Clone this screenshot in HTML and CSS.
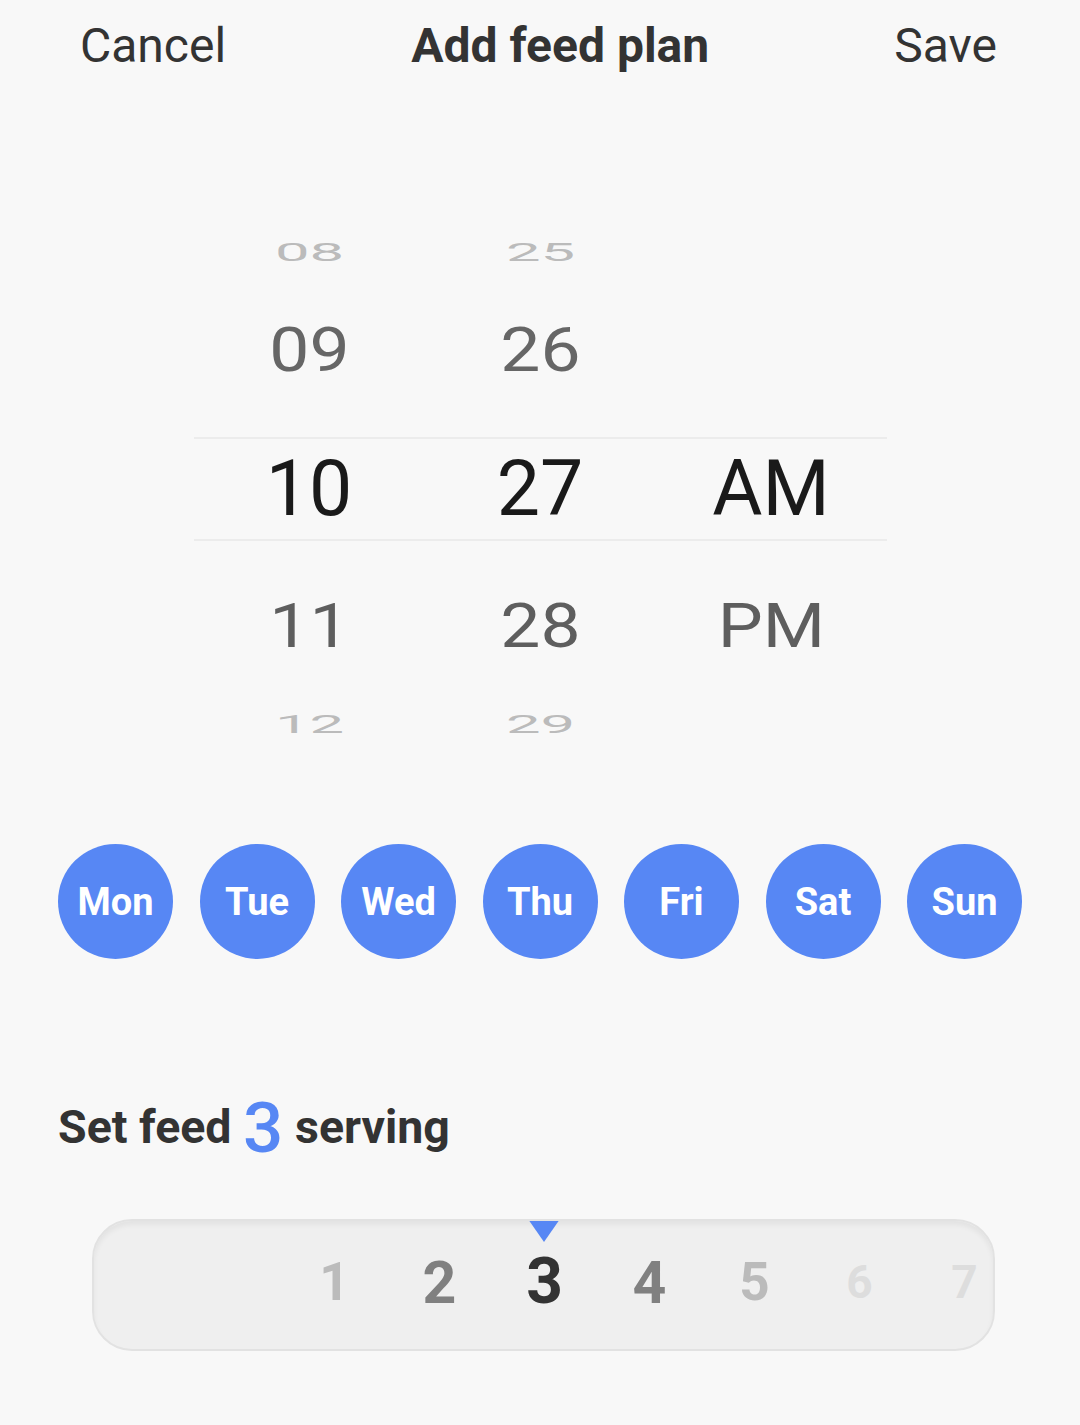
FILE: index.html
```html
<!DOCTYPE html>
<html lang="en">
<head>
    <meta charset="UTF-8">
    <meta name="viewport" content="width=device-width, initial-scale=1.0">
    <title>Add feed plan</title>
    <link rel="stylesheet" href="styles.css">
</head>
<body>
    <div id="header">
        <span class="header-btn">Cancel</span>
        <span class="header-title">Add feed plan</span>
        <span class="header-btn">Save</span>
    </div>

    <div id="picker">
        <div class="cell far">08</div>
        <div class="cell far">25</div>
        <div class="cell far"></div>

        <div class="cell near">09</div>
        <div class="cell near">26</div>
        <div class="cell near"></div>

        <div class="cell sel">10</div>
        <div class="cell sel">27</div>
        <div class="cell sel">AM</div>

        <div class="cell near below">11</div>
        <div class="cell near below">28</div>
        <div class="cell near below">PM</div>

        <div class="cell far">12</div>
        <div class="cell far">29</div>
        <div class="cell far"></div>
    </div>

    <div id="days">
        <div class="day">Mon</div>
        <div class="day">Tue</div>
        <div class="day">Wed</div>
        <div class="day">Thu</div>
        <div class="day">Fri</div>
        <div class="day">Sat</div>
        <div class="day">Sun</div>
    </div>

    <div id="feedLabel">Set feed <span class="count">3</span> serving</div>

    <div id="servings">
        <svg class="pointer" width="32" height="23" viewBox="0 0 32 23">
            <polygon points="0,0 32,0 16,23" fill="#5787f4"/>
        </svg>
        <div class="serving-row">
            <span class="num level-2">1</span>
            <span class="num level-1">2</span>
            <span class="num level-0">3</span>
            <span class="num level-1">4</span>
            <span class="num level-2">5</span>
            <span class="num level-3">6</span>
            <span class="num level-3">7</span>
        </div>
    </div>
</body>
</html>
```

FILE: styles.css
```css
body {
    margin: 0;
    padding: 0;
    font-family: Roboto, "Noto Sans", sans-serif;
    background: #f8f8f8;
    color: #333;
    width: 1080px;
    height: 1425px;
    overflow: hidden;
}
#header {
    display: flex;
    justify-content: space-between;
    box-sizing: border-box;
    height: 100px;
    padding: 18px 83px 0 80px;
    font-size: 48px;
    line-height: 56px;
}
.header-title {
    font-weight: bold;
}
#picker {
    display: grid;
    grid-template-columns: repeat(3, 231px);
    width: 693px;
    margin: 103px auto 0;
}
.cell {
    display: flex;
    justify-content: center;
    align-items: center;
    height: 98px;
    line-height: 1;
}
.far {
    color: #bbb;
    font-size: 57px;
    transform: scale(1.08, 0.45);
}
.near {
    color: #666;
    font-size: 61px;
    transform: scaleX(1.17);
}
.near.below {
    color: #5e5e5e;
}
.sel {
    box-sizing: border-box;
    height: 104px;
    margin: 38px 0 36px;
    border-top: 2px solid #ececec;
    border-bottom: 2px solid #ececec;
    color: #1a1a1a;
    font-size: 77px;
}
#days {
    display: flex;
    justify-content: space-between;
    padding: 0 58px;
    margin-top: 71px;
}
.day {
    width: 115px;
    height: 115px;
    border-radius: 50%;
    background: #5787f4;
    color: white;
    font-size: 38px;
    font-weight: bold;
    display: flex;
    justify-content: center;
    align-items: center;
}
#feedLabel {
    margin-top: 133px;
    padding-left: 58px;
    font-size: 46.5px;
    font-weight: bold;
    line-height: 70px;
    color: #333;
}
#feedLabel .count {
    font-size: 71px;
    font-weight: 500;
    line-height: 1;
    vertical-align: -9px;
    color: #5787f4;
}
#servings {
    position: relative;
    box-sizing: border-box;
    width: 903px;
    height: 132px;
    margin: 56px 0 0 92px;
    border: 2px solid #e2e2e2;
    border-radius: 40px;
    background: #efefef;
    box-shadow: inset 0 4px 5px rgba(0, 0, 0, 0.05);
    overflow: hidden;
}
.pointer {
    position: absolute;
    top: -2px;
    left: 50%;
    transform: translateX(-50%);
}
.serving-row {
    display: flex;
    align-items: center;
    height: 100%;
    box-sizing: border-box;
    padding: 0 0 6px 188px;
}
.num {
    flex: 0 0 105px;
    text-align: center;
    font-weight: bold;
    line-height: 1;
}
.level-0 {
    font-size: 64px;
    color: #333;
}
.level-1 {
    font-size: 59px;
    color: #808080;
}
.level-2 {
    font-size: 53px;
    color: #bbb;
}
.level-3 {
    font-size: 46px;
    color: #ddd;
}
```
